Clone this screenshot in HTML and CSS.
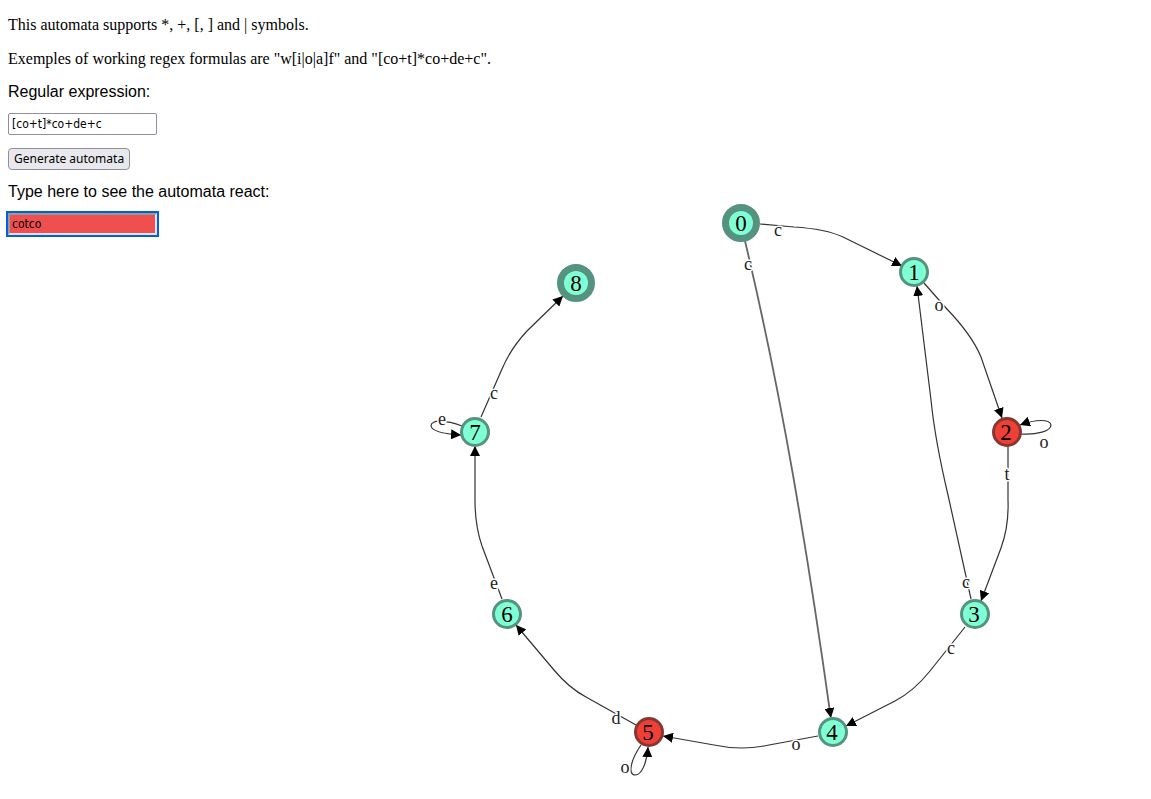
FILE: index.html
```
<!DOCTYPE html>
<html lang="en">
<head>
<meta charset="utf-8">
<title>Regex automata</title>
<link rel="stylesheet" href="styles.css">
</head>
<body>
<p class="intro">This automata supports *, +, [, ] and | symbols.</p>
<p class="intro">Exemples of working regex formulas are "w[i|o|a]f" and "[co+t]*co+de+c".</p>
<main class="workspace">
  <form class="controls">
    <label class="label" for="regex">Regular expression:</label>
    <input class="field" id="regex" type="text" value="[co+t]*co+de+c">
    <button class="button" type="button">Generate automata</button>
    <label class="label" for="word">Type here to see the automata react:</label>
    <input class="field field-rejected" id="word" type="text" value="cotco">
  </form>
  <svg class="graph" viewBox="423 83 720 700" role="img" aria-label="Automata graph">
    <defs>
      <marker id="arrow" viewBox="0 0 10 10" refX="10" refY="5" markerWidth="10" markerHeight="10" markerUnits="userSpaceOnUse" orient="auto">
        <path d="M0 0L10 5L0 10Z"/>
      </marker>
    </defs>
    <g class="edges">
      <path d="M760 224L794 227Q826 229 843 237L902 266"/>
      <path class="edge-double" d="M745 241Q771 350 793 475Q813 590 830 712"/>
      <path class="edge-tip" d="M829 706L831 718"/>
      <path d="M924 283L946 308Q972 335 981 357L1002 418"/>
      <path d="M1021 434C1037 435 1051 431 1051 425C1050 419 1036 419 1020 425"/>
      <path d="M1008 446L1008 500Q1009 526 1001 548L981 601"/>
      <path d="M971 599L948 495Q935 440 931 400L917 286"/>
      <path d="M965 627L930 671Q914 691 895 701L846 726"/>
      <path d="M818 736L769 745Q742 751 714 745L663 736"/>
      <path d="M636 725L586 697Q569 688 554 670L516 625"/>
      <path d="M641 745C630 761 628 775 635 775C642 775 647 762 648 747"/>
      <path d="M502 599L482 546Q475 526 475 500L475 446"/>
      <path d="M481 417L502 369Q511 348 527 331L563 296"/>
      <path d="M462 426C446 420 431 419 431 426C432 432 446 434 461 435"/>
    </g>
    <g class="edge-labels">
      <text x="778" y="236">c</text>
      <text x="748" y="270">c</text>
      <text x="939" y="311">o</text>
      <text x="1044" y="448">o</text>
      <text x="1007" y="480">t</text>
      <text x="966" y="588">c</text>
      <text x="951" y="654">c</text>
      <text x="796" y="750">o</text>
      <text x="616" y="724">d</text>
      <text x="625" y="773">o</text>
      <text x="494" y="589">e</text>
      <text x="442" y="425">e</text>
      <text x="494" y="399">c</text>
    </g>
    <g class="nodes">
      <circle class="final" cx="741" cy="223" r="12"/>
      <circle cx="914" cy="272" r="12"/>
      <circle class="active" cx="1007" cy="432" r="12"/>
      <circle cx="975" cy="614" r="12"/>
      <circle cx="833" cy="732" r="12"/>
      <circle class="active" cx="649" cy="732" r="12"/>
      <circle cx="507" cy="614" r="12"/>
      <circle cx="475" cy="432" r="12"/>
      <circle class="final" cx="576" cy="283" r="12"/>
    </g>
    <g class="node-labels">
      <text x="741" y="231">0</text>
      <text x="914" y="280">1</text>
      <text x="1006" y="440">2</text>
      <text x="974" y="622">3</text>
      <text x="832" y="740">4</text>
      <text x="648" y="740">5</text>
      <text x="507" y="622">6</text>
      <text x="475" y="440">7</text>
      <text x="576" y="291">8</text>
    </g>
  </svg>
</main>
</body>
</html>
```
FILE: styles.css
```
body {
  margin: 0;
  padding: 16px 8px 0;
  background: #fff;
  color: #000;
  font-family: "Liberation Serif", serif;
  font-size: 16px;
  line-height: 18px;
}

.intro {
  margin: 0;
}

.intro + .intro {
  margin-top: 16px;
}

.workspace {
  display: flex;
  align-items: flex-start;
  margin-top: 15px;
}

.controls {
  display: flex;
  flex: 0 0 415px;
  flex-direction: column;
  align-items: flex-start;
  gap: 13px;
}

.label {
  font-family: "Liberation Sans", sans-serif;
  line-height: 17px;
}

.field,
.button {
  box-sizing: border-box;
  height: 22px;
  font: 12px/16px "DejaVu Sans Condensed", "DejaVu Sans", sans-serif;
  color: #000;
}

.field {
  width: 149px;
  padding: 1px 3px;
  border: 1px solid #8f8f9d;
  border-radius: 2px;
  background: #fff;
}

.field-rejected {
  padding: 0 2px;
  border: 2px solid;
  border-color: #999 #e3e3e3 #e3e3e3 #999;
  border-radius: 0;
  outline: 2px solid #0061e0;
  background: #ef4f4f;
}

.button {
  min-width: 122px;
  padding: 0 5px;
  border: 1px solid #8f8f9d;
  border-radius: 4px;
  background: #e9e9ed;
  font-family: "Noto Sans", sans-serif;
}

.graph {
  flex: 1;
  min-width: 0;
}

.edges path {
  fill: none;
  stroke: #333;
  stroke-width: 1.2;
  marker-end: url(#arrow);
}

.edges .edge-double {
  stroke: #666;
  stroke-width: 1.8;
  marker-end: none;
}

.edges .edge-tip {
  stroke: none;
  marker-end: url(#arrow);
}

.edge-labels,
.node-labels {
  text-anchor: middle;
}

.edge-labels {
  font-size: 18px;
  fill: #222;
  stroke: #fff;
  stroke-width: 3;
  stroke-linejoin: round;
  paint-order: stroke;
}

.nodes circle {
  fill: #7fffd4;
  stroke: #55927f;
  stroke-width: 6;
  paint-order: stroke;
}

.nodes .final {
  stroke-width: 14;
}

.nodes .active {
  fill: #ee4035;
  stroke: #893632;
}

.node-labels {
  font-size: 23px;
}
```
